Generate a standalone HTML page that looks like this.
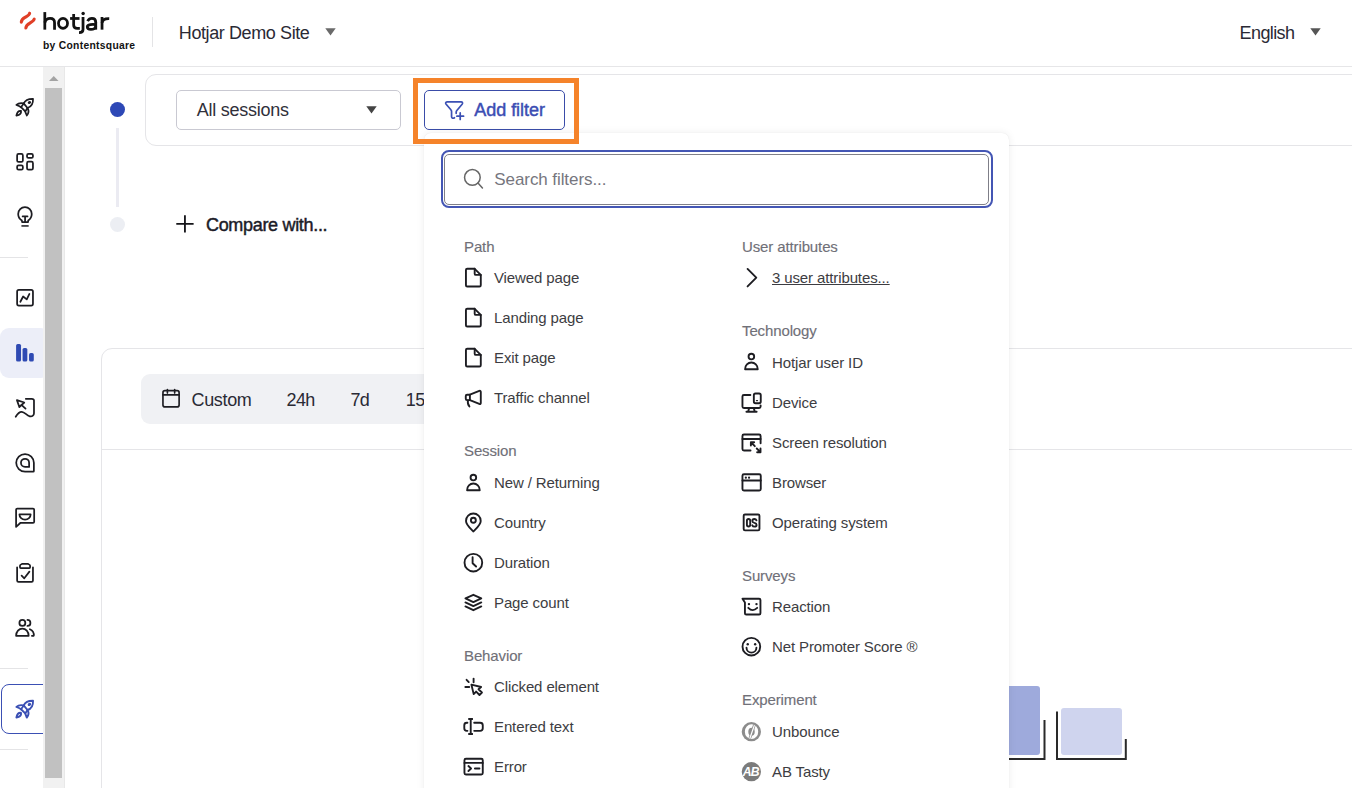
<!DOCTYPE html>
<html><head><meta charset="utf-8"><style>
*{box-sizing:border-box;margin:0;padding:0}
html,body{width:1352px;height:788px;overflow:hidden;background:#fff;font-family:"Liberation Sans",sans-serif;color:#333}
.a{position:absolute}
.t{position:absolute;white-space:nowrap;line-height:1}
svg{position:absolute;overflow:visible}
</style></head><body>
<div class="a" style="left:0;top:66px;width:1352px;height:1px;background:#e6e6e8"></div>
<svg style="left:17px;top:9px;" width="22" height="22" viewBox="0 0 788 788"><g fill="none" stroke="#e03f27" stroke-width="112" stroke-linecap="round"><path d="M 155 470 C 160 390, 210 345, 300 295 C 395 240, 450 210, 452 150"/><path d="M 318 680 C 323 600, 373 555, 463 505 C 558 450, 613 420, 615 360"/></g></svg>
<svg style="left:40px;top:9px;" width="72" height="28" viewBox="0 0 1352 526"><g fill="none" stroke="#121212" stroke-width="52" stroke-linecap="butt" stroke-linejoin="round"><path d="M 90 58 V 388"/><path d="M 90 255 C 105 200, 148 178, 190 178 C 245 178, 273 208, 273 258 V 388"/><ellipse cx="432" cy="270" rx="85" ry="92"/><path d="M 632 92 V 300 C 632 343, 655 362, 698 362 H 748"/><path d="M 565 178 H 742"/><path d="M 808 150 V 385 C 808 425, 785 444, 733 444"/><path d="M 1047 240 V 388"/><path d="M 893 228 C 912 195, 942 178, 975 178 C 1025 178, 1047 205, 1047 250"/><path d="M 1047 292 C 990 282, 888 287, 888 333 C 888 366, 918 384, 956 384 C 1005 384, 1047 360, 1047 318"/><path d="M 1165 150 V 388"/><path d="M 1165 262 C 1172 207, 1212 178, 1300 182"/></g><circle cx="810" cy="85" r="32" fill="#121212"/></svg>
<div class="t" style="left:43px;top:41.08px;font-size:10.3px;color:#121212;font-weight:700;letter-spacing:0.3px;">by Contentsquare</div>
<div class="a" style="left:152px;top:17px;width:1px;height:30px;background:#e4e4e6"></div>
<div class="t" style="left:178.8px;top:24.16px;font-size:18px;color:#2a2a35;letter-spacing:-0.4px;">Hotjar Demo Site</div>
<svg style="left:324.5px;top:28.3px;" width="11" height="8" viewBox="0 0 11 8"><path d="M0.3 0.3h10.4l-5.2 7.2z" fill="#6a6a6a"/></svg>
<div class="t" style="left:1239.6px;top:24.26px;font-size:18px;color:#2a2a35;letter-spacing:-0.6px;">English</div>
<svg style="left:1309.5px;top:28.3px;" width="11" height="8" viewBox="0 0 11 8"><path d="M0.3 0.3h10.4l-5.2 7.2z" fill="#555"/></svg>
<div class="a" style="left:0;top:328px;width:50px;height:50px;background:#eceef8;border-radius:9px"></div>
<div class="a" style="left:0;top:257px;width:28px;height:1px;background:#e4e4e6"></div>
<div class="a" style="left:0;top:668px;width:28px;height:1px;background:#e4e4e6"></div>
<div class="a" style="left:0;top:749px;width:28px;height:1px;background:#e4e4e6"></div>
<div class="a" style="left:1px;top:684px;width:50px;height:49.5px;border:1.5px solid #3b50b4;border-radius:8px"></div>
<div class="a" style="left:43px;top:67px;width:22px;height:721px;background:#f1f1f1;border-right:1px solid #e8e8e8"></div>
<div class="a" style="left:45px;top:88px;width:17px;height:690px;background:#c1c1c1"></div>
<svg style="left:48.5px;top:76px;" width="10" height="5" viewBox="0 0 10 5"><path d="M0 5h9.5l-4.75-5z" fill="#a3a3a3"/></svg>
<svg style="left:10px;top:92px;" width="30" height="30" viewBox="0 0 788 788"><g fill="none" stroke="#1d1d22" stroke-width="46" stroke-linecap="round" stroke-linejoin="round"><path d="M 360 300 C 400 210, 470 175, 605 178 C 610 300, 560 390, 460 420 Z"/><path d="M 360 300 L 290 400 L 400 510 L 460 420"/><path d="M 360 300 C 280 280, 210 300, 168 340 C 210 355, 255 375, 290 400"/><path d="M 460 420 C 495 480, 490 560, 442 618 C 422 570, 410 540, 400 510"/><path d="M 290 495 C 230 485, 185 540, 168 618 C 250 605, 300 560, 290 495 Z"/><ellipse cx="510" cy="275" rx="22" ry="14" transform="rotate(-25 510 275)" fill="#1d1d22"/></g></svg>
<svg style="left:10px;top:147px;" width="30" height="30" viewBox="0 0 788 788"><g fill="none" stroke="#1d1d22" stroke-width="46" stroke-linecap="round" stroke-linejoin="round"><rect x="187" y="182" width="151" height="211" rx="38"/><rect x="447" y="182" width="156" height="106" rx="38"/><rect x="187" y="482" width="151" height="111" rx="38"/><rect x="447" y="387" width="156" height="206" rx="38"/></g></svg>
<svg style="left:10px;top:201px;" width="30" height="30" viewBox="0 0 788 788"><g fill="none" stroke="#1d1d22" stroke-width="46" stroke-linecap="round" stroke-linejoin="round"><path d="M 312 512 C 240 465, 215 405, 215 340 A 178 178 0 0 1 571 340 C 571 405, 546 465, 478 512 L 474 558 H 318 Z"/><path d="M 332 405 H 460 M 396 405 V 555"/><path d="M 300 655 H 490" stroke-width="40" stroke-linecap="butt"/></g></svg>
<svg style="left:10px;top:283px;" width="30" height="30" viewBox="0 0 788 788"><g fill="none" stroke="#1d1d22" stroke-width="46" stroke-linecap="round" stroke-linejoin="round"><rect x="187" y="182" width="416" height="411" rx="45"/><path d="M 272 493 L 345 355 L 440 430 L 510 288"/></g></svg>
<svg style="left:10px;top:338px;" width="30" height="30" viewBox="0 0 788 788"><g fill="#2f4ab3"><rect x="160" y="155" width="130" height="465" rx="42"/><rect x="330" y="260" width="125" height="360" rx="42"/><rect x="500" y="395" width="125" height="225" rx="42"/></g></svg>
<svg style="left:10px;top:393px;" width="30" height="30" viewBox="0 0 788 788"><g fill="none" stroke="#1d1d22" stroke-width="46" stroke-linecap="round" stroke-linejoin="round"><path d="M 182 188 L 375 250 L 245 370 Z"/><path d="M 300 310 L 408 412"/><path d="M 150 625 C 200 540, 250 492, 310 495 C 390 500, 430 590, 520 612 C 590 625, 630 580, 630 530 V 200 C 630 170, 605 152, 570 152 H 415"/></g></svg>
<svg style="left:10px;top:448px;" width="30" height="30" viewBox="0 0 788 788"><g fill="none" stroke="#1d1d22" stroke-width="46" stroke-linecap="round" stroke-linejoin="round"><path d="M 395 622 A 232 232 0 1 1 627 390 V 605 Q 627 622 610 622 Z"/><path d="M 395 497 A 107 107 0 1 1 502 390 V 497 Z"/></g></svg>
<svg style="left:10px;top:503px;" width="30" height="30" viewBox="0 0 788 788"><g fill="none" stroke="#1d1d22" stroke-width="46" stroke-linecap="round" stroke-linejoin="round"><path d="M 160 628 V 180 Q 160 150 190 150 H 605 Q 635 150 635 180 V 495 Q 635 525 605 525 H 270 Z"/><path d="M 248 300 H 542 A 147 135 0 0 1 248 300 Z"/></g></svg>
<svg style="left:10px;top:557px;" width="30" height="30" viewBox="0 0 788 788"><g fill="none" stroke="#1d1d22" stroke-width="46" stroke-linecap="round" stroke-linejoin="round"><path d="M 187 272 V 620 Q 187 655 222 655 H 568 Q 603 655 603 620 V 272"/><path d="M 262 232 Q 262 205 300 190 L 325 178 H 465 L 490 190 Q 528 205 528 232 V 270 Q 528 290 508 290 H 282 Q 262 290 262 270 Z"/><path d="M 305 490 L 375 560 L 510 385"/></g></svg>
<svg style="left:10px;top:613px;" width="30" height="30" viewBox="0 0 788 788"><g fill="none" stroke="#1d1d22" stroke-width="46" stroke-linecap="round" stroke-linejoin="round"><circle cx="325" cy="260" r="78"/><path d="M 458 183 A 78 78 0 0 1 458 340"/><path d="M 160 598 C 160 490, 235 408, 325 408 C 415 408, 490 490, 490 598 Z"/><path d="M 522 425 C 600 460, 632 530, 625 598 H 575"/></g></svg>
<svg style="left:10px;top:694px;" width="30" height="30" viewBox="0 0 788 788"><g fill="none" stroke="#3b50b4" stroke-width="50" stroke-linecap="round" stroke-linejoin="round"><path d="M 360 300 C 400 210, 470 175, 605 178 C 610 300, 560 390, 460 420 Z"/><path d="M 360 300 L 290 400 L 400 510 L 460 420"/><path d="M 360 300 C 280 280, 210 300, 168 340 C 210 355, 255 375, 290 400"/><path d="M 460 420 C 495 480, 490 560, 442 618 C 422 570, 410 540, 400 510"/><path d="M 290 495 C 230 485, 185 540, 168 618 C 250 605, 300 560, 290 495 Z"/><ellipse cx="510" cy="275" rx="22" ry="14" transform="rotate(-25 510 275)" fill="#3b50b4"/></g></svg>
<div class="a" style="left:110px;top:101.8px;width:15px;height:15px;border-radius:50%;background:#2d48b6"></div>
<div class="a" style="left:116.3px;top:127.5px;width:2.4px;height:79px;background:#ebebf2"></div>
<div class="a" style="left:110px;top:217.2px;width:15px;height:15px;border-radius:50%;background:#eceef3"></div>
<div class="a" style="left:145px;top:74px;width:1300px;height:72px;border:1px solid #e5e5e8;border-radius:11px"></div>
<div class="a" style="left:176px;top:90px;width:225px;height:40px;border:1px solid #c9c9d2;border-radius:5px"></div>
<div class="t" style="left:196.7px;top:101.26px;font-size:18px;color:#30303a;letter-spacing:-0.25px;">All sessions</div>
<svg style="left:365.5px;top:106px;" width="11" height="8" viewBox="0 0 11 8"><path d="M0.3 0.3h10.4l-5.2 7.2z" fill="#444"/></svg>
<div class="a" style="left:424px;top:90px;width:141px;height:40px;border:1.5px solid #3a4ca8;border-radius:5px"></div>
<svg style="left:441px;top:97px;" width="26" height="26" viewBox="0 0 788 788"><g fill="none" stroke="#3b50b4" stroke-width="52" stroke-linecap="round" stroke-linejoin="round"><path d="M 408 628 Q 378 652 348 640 Q 320 628 320 600 V 440 Q 320 410 300 388 L 150 210 Q 130 180 150 160 Q 165 145 190 145 H 610 Q 640 145 650 170 Q 660 195 640 220 L 480 410 Q 460 435 460 460 V 495"/><path d="M 582 482 V 680 M 482 582 H 684"/></g></svg>
<div class="t" style="left:474.3px;top:101.06px;font-size:18px;color:#3b4db3;-webkit-text-stroke:0.45px #3b4db3;letter-spacing:-0.05px;">Add filter</div>
<svg style="left:172px;top:211px;" width="26" height="26" viewBox="0 0 788 788"><g fill="none" stroke="#151519" stroke-width="55" stroke-linecap="butt" stroke-linejoin="round"><path d="M 392 130 V 655 M 130 392 H 655"/></g></svg>
<div class="t" style="left:206px;top:215.86px;font-size:18px;color:#1c1c28;-webkit-text-stroke:0.45px #1c1c28;letter-spacing:-0.32px;">Compare with...</div>
<div class="a" style="left:100.5px;top:348px;width:1300px;height:600px;border:1px solid #e5e5e8;border-radius:11px"></div>
<div class="a" style="left:101px;top:449px;width:1251px;height:1px;background:#e5e5e8"></div>
<div class="a" style="left:141px;top:374px;width:400px;height:49.5px;background:#f0f1f4;border-radius:9px"></div>
<svg style="left:158px;top:385px;" width="26" height="26" viewBox="0 0 788 788"><g fill="none" stroke="#1d1d22" stroke-width="50" stroke-linecap="round" stroke-linejoin="round"><rect x="150" y="172" width="490" height="493" rx="60"/><path d="M 150 300 H 640 M 285 135 V 245 M 505 135 V 245"/></g></svg>
<div class="t" style="left:191.5px;top:391.46px;font-size:18px;color:#2a2a35;letter-spacing:-0.33px;">Custom</div>
<div class="t" style="left:286.6px;top:391.46px;font-size:18px;color:#2a2a35;letter-spacing:-0.65px;">24h</div>
<div class="t" style="left:350.5px;top:391.46px;font-size:18px;color:#2a2a35;letter-spacing:-0.65px;">7d</div>
<div class="t" style="left:405.8px;top:391.46px;font-size:18px;color:#2a2a35;letter-spacing:-0.65px;">15d</div>
<div class="a" style="left:980px;top:686px;width:59.5px;height:69px;background:#9eaadc;border-radius:3px"></div>
<div class="a" style="left:1061px;top:707.5px;width:61px;height:47.3px;background:#cfd4ee;border-radius:3px"></div>
<svg style="left:960px;top:700px;" width="180" height="70" viewBox="0 0 180 70"><path d="M0 59 H 84.5 V 20" stroke="#2a2a2a" stroke-width="2" fill="none"/><path d="M97 11.5 V 59 H 165.8 V 39" stroke="#2a2a2a" stroke-width="2" fill="none"/></svg>
<div class="a" style="left:424px;top:133px;width:585px;height:700px;background:#fff;border-radius:7px;box-shadow:0 0 1px rgba(0,0,0,0.10),0 0 9px rgba(0,0,0,0.07)"></div>
<div class="a" style="left:440.5px;top:150px;width:552px;height:57.5px;border:2.6px solid #4456b4;border-radius:8px"></div>
<div class="a" style="left:444px;top:154px;width:545px;height:50.5px;border:1.5px solid #7f7f88;border-radius:5px"></div>
<svg style="left:460px;top:166px;" width="26" height="26" viewBox="0 0 788 788"><g fill="none" stroke="#666" stroke-width="46" stroke-linecap="round" stroke-linejoin="round"><circle cx="375" cy="345" r="237"/><path d="M 545 515 L 680 665"/></g></svg>
<div class="t" style="left:494.3px;top:171.21px;font-size:17px;color:#76767e;letter-spacing:-0.08px;">Search filters...</div>
<div class="t" style="left:464px;top:239.20px;font-size:15px;color:#707078;letter-spacing:-0.12px;-webkit-text-stroke:0.15px #707078;">Path</div>
<svg style="left:460px;top:265px;" width="26" height="26" viewBox="0 0 788 788"><g fill="none" stroke="#1d1d22" stroke-width="57" stroke-linecap="round" stroke-linejoin="round"><path d="M 445 115 H 220 Q 180 115 180 155 V 610 Q 180 650 220 650 H 590 Q 630 650 630 610 V 300 Z"/><path d="M 445 115 V 262 Q 445 300 483 300 H 630"/></g></svg>
<div class="t" style="left:494px;top:270.40px;font-size:15px;color:#3d3d42;letter-spacing:-0.12px;">Viewed page</div>
<svg style="left:460px;top:305px;" width="26" height="26" viewBox="0 0 788 788"><g fill="none" stroke="#1d1d22" stroke-width="57" stroke-linecap="round" stroke-linejoin="round"><path d="M 445 115 H 220 Q 180 115 180 155 V 610 Q 180 650 220 650 H 590 Q 630 650 630 610 V 300 Z"/><path d="M 445 115 V 262 Q 445 300 483 300 H 630"/></g></svg>
<div class="t" style="left:494px;top:310.40px;font-size:15px;color:#3d3d42;letter-spacing:-0.12px;">Landing page</div>
<svg style="left:460px;top:345px;" width="26" height="26" viewBox="0 0 788 788"><g fill="none" stroke="#1d1d22" stroke-width="57" stroke-linecap="round" stroke-linejoin="round"><path d="M 445 115 H 220 Q 180 115 180 155 V 610 Q 180 650 220 650 H 590 Q 630 650 630 610 V 300 Z"/><path d="M 445 115 V 262 Q 445 300 483 300 H 630"/></g></svg>
<div class="t" style="left:494px;top:350.40px;font-size:15px;color:#3d3d42;letter-spacing:-0.12px;">Exit page</div>
<svg style="left:460px;top:385px;" width="26" height="26" viewBox="0 0 788 788"><g fill="none" stroke="#1d1d22" stroke-width="57" stroke-linecap="round" stroke-linejoin="round"><path d="M 300 295 H 215 Q 175 295 175 335 V 420 Q 175 460 215 460 H 300 Z"/><path d="M 300 295 L 585 180 Q 630 165 630 210 V 545 Q 630 590 585 575 L 300 460"/><path d="M 240 468 C 228 540, 238 600, 285 650"/></g></svg>
<div class="t" style="left:494px;top:390.40px;font-size:15px;color:#3d3d42;letter-spacing:-0.12px;">Traffic channel</div>
<div class="t" style="left:464px;top:443.10px;font-size:15px;color:#707078;letter-spacing:-0.12px;-webkit-text-stroke:0.15px #707078;">Session</div>
<svg style="left:460px;top:470px;" width="26" height="26" viewBox="0 0 788 788"><g fill="none" stroke="#1d1d22" stroke-width="57" stroke-linecap="round" stroke-linejoin="round"><circle cx="405" cy="230" r="85"/><path d="M 215 612 C 215 498, 300 410, 405 410 C 510 410, 598 498, 598 612 Z"/></g></svg>
<div class="t" style="left:494px;top:475.40px;font-size:15px;color:#3d3d42;letter-spacing:-0.12px;">New / Returning</div>
<svg style="left:460px;top:510px;" width="26" height="26" viewBox="0 0 788 788"><g fill="none" stroke="#1d1d22" stroke-width="57" stroke-linecap="round" stroke-linejoin="round"><path d="M 405 650 C 300 540, 182 440, 182 330 A 223 223 0 0 1 628 330 C 628 440, 510 540, 405 650 Z"/><circle cx="405" cy="310" r="75"/></g></svg>
<div class="t" style="left:494px;top:515.40px;font-size:15px;color:#3d3d42;letter-spacing:-0.12px;">Country</div>
<svg style="left:460px;top:550px;" width="26" height="26" viewBox="0 0 788 788"><g fill="none" stroke="#1d1d22" stroke-width="57" stroke-linecap="round" stroke-linejoin="round"><circle cx="405" cy="385" r="268"/><path d="M 382 218 V 400 L 488 500"/></g></svg>
<div class="t" style="left:494px;top:555.40px;font-size:15px;color:#3d3d42;letter-spacing:-0.12px;">Duration</div>
<svg style="left:460px;top:590px;" width="26" height="26" viewBox="0 0 788 788"><g fill="none" stroke="#1d1d22" stroke-width="57" stroke-linecap="round" stroke-linejoin="round"><path d="M 405 145 L 645 255 L 405 368 L 165 255 Z"/><path d="M 165 378 L 405 490 L 645 378"/><path d="M 165 498 L 405 612 L 645 498"/></g></svg>
<div class="t" style="left:494px;top:595.40px;font-size:15px;color:#3d3d42;letter-spacing:-0.12px;">Page count</div>
<div class="t" style="left:464px;top:648.20px;font-size:15px;color:#707078;letter-spacing:-0.12px;-webkit-text-stroke:0.15px #707078;">Behavior</div>
<svg style="left:460px;top:674px;" width="26" height="26" viewBox="0 0 788 788"><g fill="none" stroke="#1d1d22" stroke-width="57" stroke-linecap="round" stroke-linejoin="round"><path d="M 200 175 L 265 245 M 412 140 V 250 M 162 395 H 280"/><path d="M 345 320 L 640 395 L 560 462 L 665 562 L 590 637 L 490 532 L 415 610 Z"/></g></svg>
<div class="t" style="left:494px;top:679.40px;font-size:15px;color:#3d3d42;letter-spacing:-0.12px;">Clicked element</div>
<svg style="left:460px;top:714px;" width="26" height="26" viewBox="0 0 788 788"><g fill="none" stroke="#1d1d22" stroke-width="57" stroke-linecap="round" stroke-linejoin="round"><path d="M 225 265 H 205 Q 130 265 130 340 V 435 Q 130 510 205 510 H 225"/><path d="M 430 265 H 610 Q 690 265 690 340 V 435 Q 690 510 610 510 H 430"/><path d="M 325 150 V 605"/><path d="M 250 150 H 392 M 250 605 H 392" stroke-width="58" stroke-linecap="butt"/></g></svg>
<div class="t" style="left:494px;top:719.40px;font-size:15px;color:#3d3d42;letter-spacing:-0.12px;">Entered text</div>
<svg style="left:460px;top:754px;" width="26" height="26" viewBox="0 0 788 788"><g fill="none" stroke="#1d1d22" stroke-width="57" stroke-linecap="round" stroke-linejoin="round"><rect x="135" y="145" width="555" height="475" rx="45"/><path d="M 135 270 H 690"/><path d="M 255 365 L 335 440 L 255 515 M 452 440 H 590"/></g></svg>
<div class="t" style="left:494px;top:759.40px;font-size:15px;color:#3d3d42;letter-spacing:-0.12px;">Error</div>
<div class="t" style="left:742px;top:239.20px;font-size:15px;color:#707078;letter-spacing:-0.12px;-webkit-text-stroke:0.15px #707078;">User attributes</div>
<svg style="left:738px;top:265px;" width="26" height="26" viewBox="0 0 788 788"><g fill="none" stroke="#1d1d22" stroke-width="57" stroke-linecap="round" stroke-linejoin="round"><path d="M 290 120 L 555 385 L 290 650"/></g></svg>
<div class="t" style="left:772px;top:270.40px;font-size:15px;color:#3d3d42;letter-spacing:-0.12px;text-decoration:underline;text-underline-offset:1px;">3 user attributes...</div>
<div class="t" style="left:742px;top:322.80px;font-size:15px;color:#707078;letter-spacing:-0.12px;-webkit-text-stroke:0.15px #707078;">Technology</div>
<svg style="left:738px;top:349.4px;" width="26" height="26" viewBox="0 0 788 788"><g fill="none" stroke="#1d1d22" stroke-width="57" stroke-linecap="round" stroke-linejoin="round"><circle cx="405" cy="230" r="85"/><path d="M 215 612 C 215 498, 300 410, 405 410 C 510 410, 598 498, 598 612 Z"/></g></svg>
<div class="t" style="left:772px;top:354.80px;font-size:15px;color:#3d3d42;letter-spacing:-0.12px;">Hotjar user ID</div>
<svg style="left:738px;top:389.4px;" width="26" height="26" viewBox="0 0 788 788"><g fill="none" stroke="#1d1d22" stroke-width="57" stroke-linecap="round" stroke-linejoin="round"><path d="M 375 180 H 180 Q 135 180 135 225 V 530 Q 135 575 180 575 H 640 Q 685 575 685 530 V 495"/><path d="M 338 580 L 305 690 M 478 580 L 510 690 M 255 690 H 565"/><rect x="480" y="137" width="210" height="293" rx="50"/><path d="M 560 350 H 590" stroke-width="40"/></g></svg>
<div class="t" style="left:772px;top:394.80px;font-size:15px;color:#3d3d42;letter-spacing:-0.12px;">Device</div>
<svg style="left:738px;top:429.4px;" width="26" height="26" viewBox="0 0 788 788"><g fill="none" stroke="#1d1d22" stroke-width="57" stroke-linecap="round" stroke-linejoin="round"><path d="M 380 650 H 180 Q 135 650 135 605 V 210 Q 135 165 180 165 H 640 Q 685 165 685 210 V 430"/><path d="M 135 305 H 685"/><path d="M 392 402 L 510 520 M 390 400 H 490 M 390 400 V 500"/><path d="M 568 590 L 680 702 M 682 704 V 590 M 682 704 H 580"/></g></svg>
<div class="t" style="left:772px;top:434.80px;font-size:15px;color:#3d3d42;letter-spacing:-0.12px;">Screen resolution</div>
<svg style="left:738px;top:469.4px;" width="26" height="26" viewBox="0 0 788 788"><g fill="none" stroke="#1d1d22" stroke-width="57" stroke-linecap="round" stroke-linejoin="round"><rect x="135" y="160" width="555" height="490" rx="45"/><path d="M 135 350 H 690"/><circle cx="238" cy="265" r="34" fill="#1d1d22" stroke="none"/><circle cx="335" cy="265" r="34" fill="#1d1d22" stroke="none"/></g></svg>
<div class="t" style="left:772px;top:474.80px;font-size:15px;color:#3d3d42;letter-spacing:-0.12px;">Browser</div>
<svg style="left:738px;top:509.4px;" width="26" height="26" viewBox="0 0 788 788"><g fill="none" stroke="#1d1d22" stroke-width="57" stroke-linecap="round" stroke-linejoin="round"><rect x="172" y="168" width="478" height="480" rx="40"/><rect x="270" y="305" width="100" height="225" rx="50"/><path d="M 560 345 Q 545 302 495 302 Q 435 302 435 360 Q 435 405 500 420 Q 563 433 563 482 Q 563 535 500 535 Q 450 535 432 495"/></g></svg>
<div class="t" style="left:772px;top:514.80px;font-size:15px;color:#3d3d42;letter-spacing:-0.12px;">Operating system</div>
<div class="t" style="left:742px;top:568.20px;font-size:15px;color:#707078;letter-spacing:-0.12px;-webkit-text-stroke:0.15px #707078;">Surveys</div>
<svg style="left:738px;top:594px;" width="26" height="26" viewBox="0 0 788 788"><g fill="none" stroke="#1d1d22" stroke-width="57" stroke-linecap="round" stroke-linejoin="round"><path d="M 135 145 H 640 Q 680 145 680 185 V 580 Q 680 620 640 620 H 250 Q 210 620 210 580 V 255 Z"/><path d="M 312 420 Q 445 555 582 420"/><circle cx="332" cy="305" r="36" fill="#1d1d22" stroke="none"/><circle cx="560" cy="305" r="36" fill="#1d1d22" stroke="none"/></g></svg>
<div class="t" style="left:772px;top:599.40px;font-size:15px;color:#3d3d42;letter-spacing:-0.12px;">Reaction</div>
<svg style="left:738px;top:634px;" width="26" height="26" viewBox="0 0 788 788"><g fill="none" stroke="#1d1d22" stroke-width="57" stroke-linecap="round" stroke-linejoin="round"><circle cx="405" cy="385" r="268"/><path d="M 258 415 A 150 150 0 0 0 558 415"/><circle cx="295" cy="310" r="36" fill="#1d1d22" stroke="none"/><circle cx="520" cy="310" r="36" fill="#1d1d22" stroke="none"/></g></svg>
<div class="t" style="left:772px;top:639.40px;font-size:15px;color:#3d3d42;letter-spacing:-0.12px;">Net Promoter Score ®</div>
<div class="t" style="left:742px;top:692.10px;font-size:15px;color:#707078;letter-spacing:-0.12px;-webkit-text-stroke:0.15px #707078;">Experiment</div>
<svg style="left:738px;top:719px;" width="26" height="26" viewBox="0 0 788 788"><circle cx="405" cy="385" r="292" fill="#8c8c8c"/><ellipse cx="410" cy="385" rx="150" ry="172" fill="none" stroke="#fff" stroke-width="105"/><path d="M 500 175 L 350 610" stroke="#8c8c8c" stroke-width="80"/><path d="M 498 185 L 355 600" stroke="#fff" stroke-width="38"/></svg>
<div class="t" style="left:772px;top:724.40px;font-size:15px;color:#3d3d42;letter-spacing:-0.12px;">Unbounce</div>
<svg style="left:738px;top:759px;" width="26" height="26" viewBox="0 0 788 788"><circle cx="405" cy="385" r="292" fill="#7b7b7b"/><text x="385" y="510" text-anchor="middle" font-family="Liberation Sans" font-weight="700" font-style="italic" font-size="370" fill="#fff" letter-spacing="-25">AB</text></svg>
<div class="t" style="left:772px;top:764.40px;font-size:15px;color:#3d3d42;letter-spacing:-0.12px;">AB Tasty</div>
<div class="a" style="left:413px;top:77.5px;width:166px;height:66px;border:5px solid #f5832a"></div>
</body></html>
